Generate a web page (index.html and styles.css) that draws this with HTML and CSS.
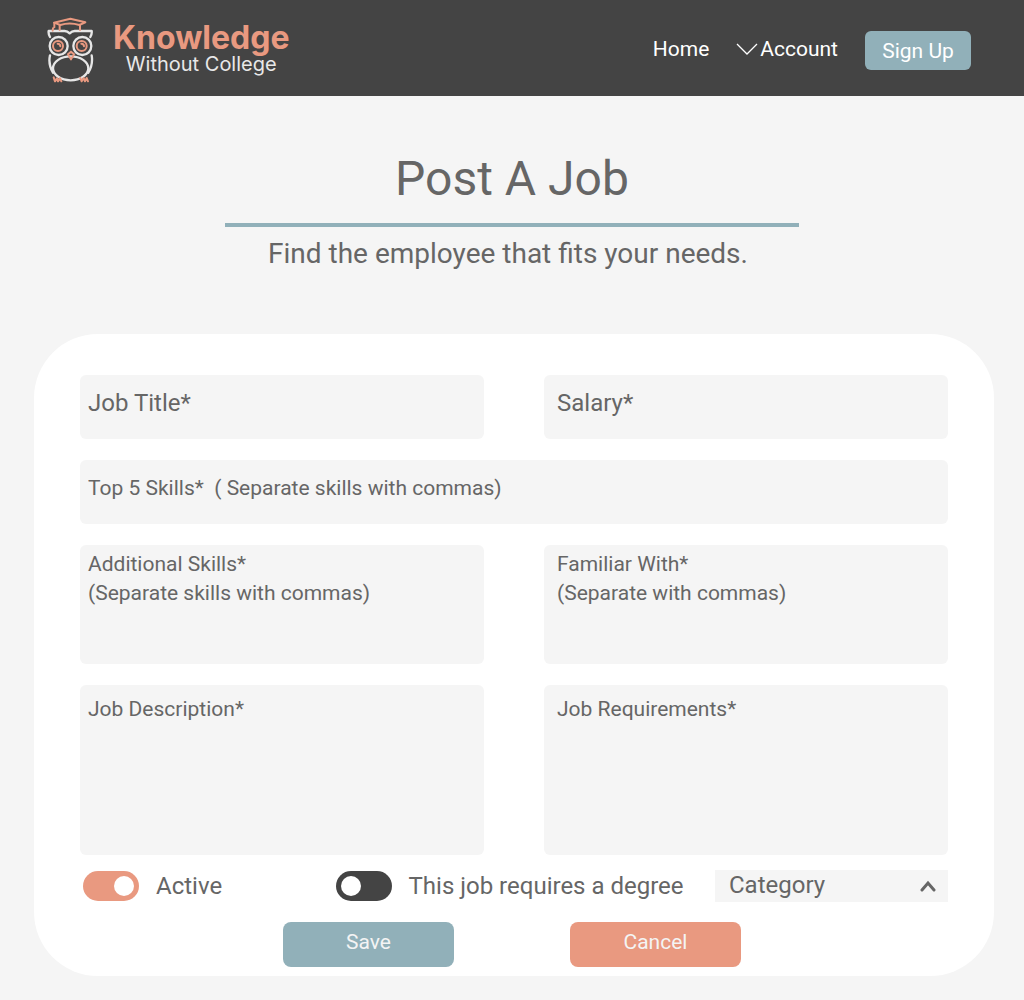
FILE: index.html
```html
<!DOCTYPE html>
<html lang="en">
<head>
<meta charset="utf-8">
<meta name="viewport" content="width=device-width, initial-scale=1">
<title>Post A Job</title>
<link rel="stylesheet" href="styles.css">
</head>
<body>
<header class="site-header">
  <a class="brand" href="#">
    <svg class="brand-owl" viewBox="51 36 144 201" fill="none" stroke-width="7" stroke-linecap="round" stroke-linejoin="round" aria-hidden="true">
      <g stroke="#e6e6e6">
        <path d="M60 96c-4-7-5-12-4-18h48c6 0 11 3 15 7 4-4 9-7 15-7h51c1 6 0 11-4 18"/>
        <circle cx="86" cy="123" r="27"/>
        <circle cx="157" cy="123" r="27"/>
        <path d="M60 151c-4 18-1 36 9 52M185 151c3 18 0 36-10 52"/>
        <ellipse cx="122" cy="190" rx="53" ry="36"/>
      </g>
      <g stroke="#e99980" stroke-width="6">
        <path d="M72 53l49-12 45 11-18 8c-19-6-39-6-57 0z"/>
        <path d="M89 60v15M150 60v15M73 55v12M69 70l-1 7"/>
        <circle cx="84" cy="123" r="15"/>
        <circle cx="155" cy="123" r="15"/>
        <path d="M83 116a8 8 0 0 1 8 8M154 116a8 8 0 0 1 8 8"/>
        <path d="M123 140l9 8-9 15-9-15z"/>
        <path d="M71 217l4 12 6-9 3 9 6-9 4 9M151 219l4 10 6-10 4 10 5-10 4 10"/>
      </g>
    </svg>
    <span class="brand-text">
      <span class="brand-name">Knowledge</span>
      <span class="brand-tag">Without College</span>
    </span>
  </a>
  <nav class="nav">
    <a class="nav-link" href="#">Home</a>
    <a class="nav-link" href="#">
      <svg class="nav-chevron" viewBox="0 0 22 12" fill="none" stroke="#fff" stroke-width="1.3" aria-hidden="true"><path d="M1 1l10 10L21 1"/></svg>Account</a>
    <button class="sign-up" type="button">Sign Up</button>
  </nav>
</header>

<main>
  <div class="intro">
    <h1 class="title">Post A Job</h1>
    <p class="subtitle">Find the employee that fits your needs.</p>
  </div>

  <form class="card">
    <div class="fields">
      <input class="field field-title" type="text" placeholder="Job Title*" aria-label="Job Title">
      <input class="field field-title field-right" type="text" placeholder="Salary*" aria-label="Salary">
      <input class="field field-wide" type="text" placeholder="Top 5 Skills*&nbsp; ( Separate skills with commas)" aria-label="Top 5 Skills">
      <textarea class="field field-area" placeholder="Additional Skills*&#10;(Separate skills with commas)" aria-label="Additional Skills"></textarea>
      <textarea class="field field-area field-right" placeholder="Familiar With*&#10;(Separate with commas)" aria-label="Familiar With"></textarea>
      <textarea class="field field-area field-tall" placeholder="Job Description*" aria-label="Job Description"></textarea>
      <textarea class="field field-area field-tall field-right" placeholder="Job Requirements*" aria-label="Job Requirements"></textarea>
    </div>
    <div class="options">
      <label class="option"><input class="toggle" type="checkbox" checked>Active</label>
      <label class="option option-degree"><input class="toggle" type="checkbox">This job requires a degree</label>
      <div class="category">
        <select class="category-select" aria-label="Category"><option>Category</option></select>
        <svg class="category-chevron" viewBox="0 0 16 12" fill="none" stroke="#666" stroke-width="3" stroke-linecap="round" aria-hidden="true"><path d="M2 10l6-7 6 7"/></svg>
      </div>
    </div>
    <div class="actions">
      <button class="action action-save" type="submit">Save</button>
      <button class="action action-cancel" type="button">Cancel</button>
    </div>
  </form>
</main>
</body>
</html>
```
FILE: styles.css
```css
* {
  box-sizing: border-box;
}

body {
  margin: 0;
  background: #f5f5f5;
  color: #666;
  font-family: Roboto, "Liberation Sans", sans-serif;
  font-size: 21px;
}

a {
  color: inherit;
  text-decoration: none;
}

button,
input,
textarea,
select {
  border: 0;
  margin: 0;
  font: inherit;
  color: inherit;
}

.site-header {
  display: flex;
  align-items: center;
  justify-content: space-between;
  min-height: 96px;
  padding: 0 53px 0 47px;
  background: #444;
  color: #fff;
}

.brand {
  display: flex;
  align-items: center;
  gap: 18px;
  padding-top: 4px;
}

.brand-owl {
  width: 48px;
  height: 67px;
}

.brand-text {
  display: flex;
  flex-direction: column;
  align-items: center;
  gap: 2px;
  font-family: Inter, sans-serif;
}

.brand-name {
  color: #e99980;
  font-size: 32px;
  font-weight: 700;
  line-height: 26px;
}

.brand-tag {
  color: #e8e8e8;
  font-size: 20px;
  font-weight: 400;
  line-height: 22px;
}

.nav {
  display: flex;
  align-items: center;
  gap: 27px;
  padding-top: 5px;
}

.nav-link {
  display: flex;
  align-items: center;
  gap: 2px;
  padding-bottom: 4px;
}

.nav-chevron {
  width: 22px;
  height: 12px;
}

.sign-up {
  width: 106px;
  height: 39px;
  padding: 0;
  border-radius: 6px;
  background: #91b0b9;
}

.intro {
  width: 56%;
  margin: 0 auto;
  padding: 49px 0 62px;
  text-align: center;
}

.title {
  margin: 0;
  padding-bottom: 10px;
  border-bottom: 4px solid #91b0b9;
  font-size: 48px;
  font-weight: 400;
  line-height: 68px;
}

.subtitle {
  margin: 0;
  padding: 9px 8px 0 0;
  font-size: 28px;
  line-height: 36px;
}

.card {
  margin: 0 30px 24px 34px;
  padding: 41px 46px 9px;
  border-radius: 64px;
  background: #fff;
}

.fields {
  display: grid;
  grid-template-columns: 1fr 1fr;
  gap: 21px 60px;
}

.field {
  width: 100%;
  height: 64px;
  padding: 0 8px 8px;
  border-radius: 6px;
  background: #f5f5f5;
}

.field::placeholder {
  color: #666;
  opacity: 1;
}

.field-title {
  font-size: 24px;
}

.field-wide {
  grid-column: 1 / -1;
}

.field-area {
  display: block;
  height: 119px;
  padding-top: 5px;
  line-height: 29px;
  resize: none;
}

.field-tall {
  height: 170px;
  padding-top: 10px;
}

.field-right {
  padding-left: 13px;
}

.options {
  display: flex;
  align-items: center;
  justify-content: space-between;
  margin-top: 15px;
  padding-left: 3px;
  font-size: 24px;
  line-height: 30px;
}

.option {
  display: flex;
  align-items: center;
  gap: 17px;
}

.option-degree {
  margin-left: 82px;
}

.toggle {
  display: flex;
  align-items: center;
  width: 56px;
  height: 30px;
  margin: 0;
  padding: 0 5px;
  border-radius: 15px;
  background: #444;
  appearance: none;
}

.toggle::before {
  width: 20px;
  height: 20px;
  border-radius: 50%;
  background: #fff;
  content: "";
}

.toggle:checked {
  justify-content: flex-end;
  background: #e99980;
}

.category {
  display: flex;
  align-items: center;
  width: 233px;
  height: 32px;
  padding: 0 12px 0 14px;
  background: #f5f5f5;
}

.category-select {
  flex: 1;
  padding: 0 0 2px;
  background: transparent;
  appearance: none;
}

.category-chevron {
  width: 16px;
  height: 12px;
  pointer-events: none;
}

.actions {
  display: flex;
  justify-content: center;
  gap: 116px;
  margin-top: 20px;
  padding-right: 4px;
}

.action {
  width: 171px;
  height: 45px;
  padding: 0 0 6px;
  border-radius: 8px;
  color: #f4f4f4;
}

.action-save {
  background: #91b0b9;
}

.action-cancel {
  background: #e99980;
}
```
